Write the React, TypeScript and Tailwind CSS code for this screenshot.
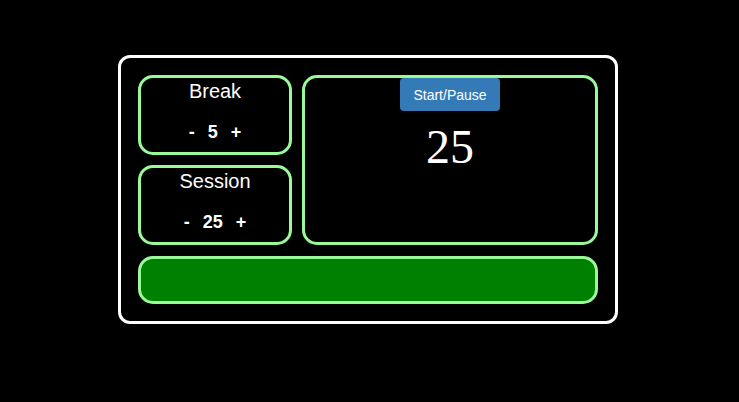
import { useState } from 'react';

type LengthProps = {
  label: string;
  value: number;
  onDec: () => void;
  onInc: () => void;
};

function LengthControl({ label, value, onDec, onInc }: LengthProps) {
  return (
    <div className="flex h-[80px] flex-col items-center rounded-[15px] border-[3px] border-[#98fb98] pt-[2px]">
      <div className="text-[20px] leading-[23px] text-white">{label}</div>
      <div className="mt-[19px] flex items-center gap-[13px] text-[18px] font-bold leading-[21px] text-white">
        <button type="button" onClick={onDec}>
          -
        </button>
        <span>{value}</span>
        <button type="button" onClick={onInc}>
          +
        </button>
      </div>
    </div>
  );
}

export default function App() {
  const [breakLen, setBreakLen] = useState(5);
  const [sessionLen, setSessionLen] = useState(25);

  return (
    <div className="min-h-[402px] w-full bg-black pt-[55px] font-['Liberation_Sans',Arial,sans-serif]">
      <div className="ml-[118px] w-[500px] rounded-[12px] border-[3px] border-white p-[17px]">
        <div className="flex gap-[10px]">
          <div className="flex w-[154px] flex-col gap-[10px]">
            <LengthControl
              label="Break"
              value={breakLen}
              onDec={() => setBreakLen((v) => Math.max(1, v - 1))}
              onInc={() => setBreakLen((v) => v + 1)}
            />
            <LengthControl
              label="Session"
              value={sessionLen}
              onDec={() => setSessionLen((v) => Math.max(1, v - 1))}
              onInc={() => setSessionLen((v) => v + 1)}
            />
          </div>
          <div className="flex h-[170px] w-[296px] flex-col items-center rounded-[15px] border-[3px] border-[#98fb98]">
            <button
              type="button"
              className="h-[33px] w-[100px] rounded-[4px] bg-[#337ab7] text-[14px] leading-[20px] text-white"
            >
              Start/Pause
            </button>
            <div className="font-['Liberation_Serif','Times_New_Roman',serif] text-[48px] text-white">
              {sessionLen}
            </div>
          </div>
        </div>
        <div className="mt-[11px] h-[48px] rounded-[15px] border-[3px] border-[#98fb98] bg-[#008000]" />
      </div>
    </div>
  );
}
